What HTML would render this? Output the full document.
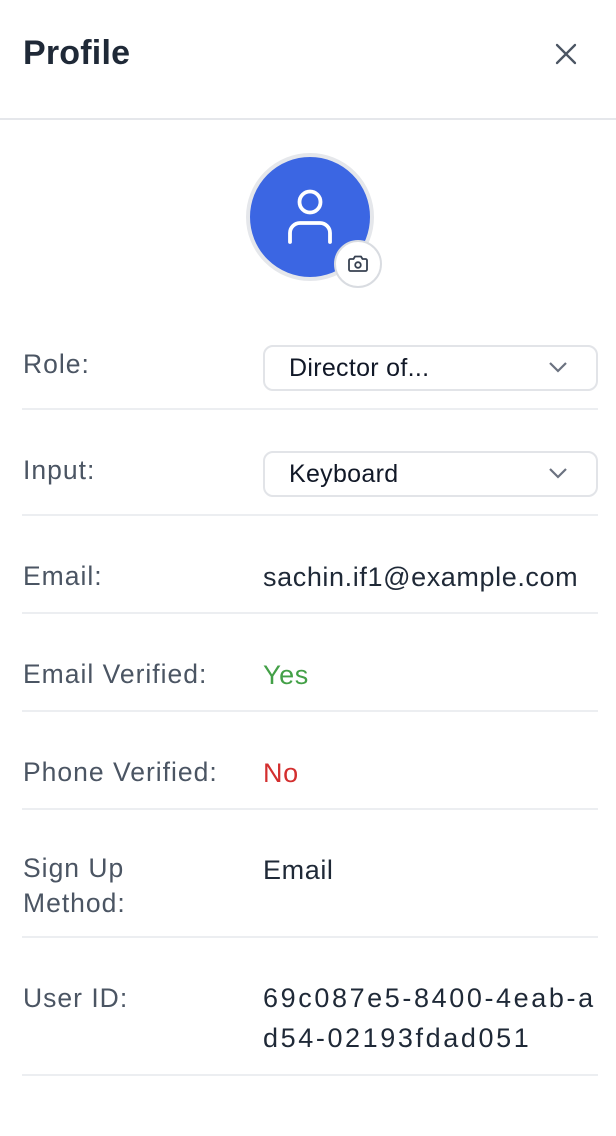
<!DOCTYPE html>
<html><head><style>
*{margin:0;padding:0;box-sizing:border-box}
body{width:616px;height:1136px;background:#fff;font-family:"Liberation Sans",sans-serif;position:relative;overflow:hidden}
.a{position:absolute}
.h{left:23px;top:34px;font-size:34px;font-weight:bold;color:#1f2937;letter-spacing:0.2px}
.hl{left:0;top:118px;width:616px;height:2px;background:#e5e7eb}
.lab{position:absolute;left:23px;font-size:26.5px;color:#4b5563;line-height:35px;letter-spacing:1px}
.val{position:absolute;left:263px;font-size:27px;color:#1f2937;line-height:40px;letter-spacing:0.6px}
.div{position:absolute;left:22px;width:576px;height:2px;background:#eceef1}
.sel{position:absolute;left:263px;width:335px;height:46px;border:2px solid #e2e4e8;border-radius:10px;font-size:25px;color:#111827;padding-left:24px;line-height:42px;letter-spacing:0.3px}
.sel svg{position:absolute;right:28px;top:14px}
</style></head><body>
<div class="a h">Profile</div>
<svg class="a" style="left:554px;top:42px" width="24" height="24" viewBox="0 0 24 24"><path d="M3 3L21 21M21 3L3 21" stroke="#4b5563" stroke-width="2.3" stroke-linecap="round"/></svg>
<div class="a hl"></div>
<div class="a" style="left:246px;top:153px;width:128px;height:128px;border-radius:50%;background:#3b66e3;border:4px solid #e5e7eb"></div>
<svg class="a" style="left:286px;top:188px" width="48" height="58" viewBox="0 0 48 58"><circle cx="24" cy="14" r="10.5" fill="none" stroke="#fff" stroke-width="3.8"/><path d="M4 54V45a10 10 0 0 1 10-10h20a10 10 0 0 1 10 10v9" fill="none" stroke="#fff" stroke-width="3.8" stroke-linecap="round"/></svg>
<div class="a" style="left:334px;top:240px;width:48px;height:48px;border-radius:50%;background:#fff;border:2px solid #d9dce1"></div>
<svg class="a" style="left:346px;top:252px" width="24" height="24" viewBox="0 0 24 24"><path d="M3 8.5a1.5 1.5 0 0 1 1.5-1.5h3l1.5-2.5h6l1.5 2.5h3A1.5 1.5 0 0 1 21 8.5v9a1.5 1.5 0 0 1-1.5 1.5h-15A1.5 1.5 0 0 1 3 17.5z" fill="none" stroke="#374151" stroke-width="1.8" stroke-linejoin="round"/><circle cx="12" cy="13" r="2.8" fill="none" stroke="#374151" stroke-width="1.8"/></svg>

<div class="lab" style="top:347px">Role:</div>
<div class="sel" style="top:345px">Director of...<svg width="20" height="12" viewBox="0 0 20 12"><path d="M2 2l8 8 8-8" fill="none" stroke="#6b7280" stroke-width="2.2"/></svg></div>
<div class="div" style="top:408px"></div>

<div class="lab" style="top:453px">Input:</div>
<div class="sel" style="top:451px">Keyboard<svg width="20" height="12" viewBox="0 0 20 12"><path d="M2 2l8 8 8-8" fill="none" stroke="#6b7280" stroke-width="2.2"/></svg></div>
<div class="div" style="top:514px"></div>

<div class="lab" style="top:559px">Email:</div>
<div class="val" style="top:557px">sachin.if1@example.com</div>
<div class="div" style="top:612px"></div>

<div class="lab" style="top:657px">Email Verified:</div>
<div class="val" style="top:655px;color:#43a047">Yes</div>
<div class="div" style="top:710px"></div>

<div class="lab" style="top:755px">Phone Verified:</div>
<div class="val" style="top:753px;color:#d32f2f">No</div>
<div class="div" style="top:808px"></div>

<div class="lab" style="top:851px">Sign Up<br>Method:</div>
<div class="val" style="top:850px">Email</div>
<div class="div" style="top:936px"></div>

<div class="lab" style="top:981px">User ID:</div>
<div class="val" style="top:978px;letter-spacing:2.6px">69c087e5-8400-4eab-a<br>d54-02193fdad051</div>
<div class="div" style="top:1074px"></div>
</body></html>
